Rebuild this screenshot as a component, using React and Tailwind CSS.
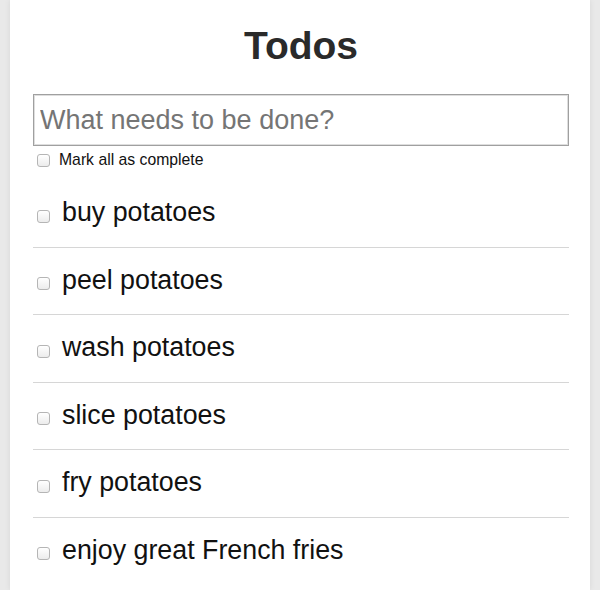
import React from "react";

const todos = [
  "buy potatoes",
  "peel potatoes",
  "wash potatoes",
  "slice potatoes",
  "fry potatoes",
  "enjoy great French fries",
];

function Box({ className = "" }) {
  return (
    <input
      type="checkbox"
      className={
        "appearance-none shrink-0 w-[13px] h-[13px] border border-[#b5b5b5] rounded-[3px] bg-gradient-to-b from-white to-[#ececec] " +
        className
      }
    />
  );
}

export default function App() {
  return (
    <div className="min-h-[590px] bg-[#e9e9e9] font-['Liberation_Sans',Arial,sans-serif]">
      <div className="mx-[10px] min-h-[590px] bg-white pl-[23px] pr-[21px] pt-[24px] shadow-[0_0_6px_rgba(0,0,0,0.08)]">
        <h1 className="text-center text-[39px] leading-[44px] font-bold text-[#2a2a2a]">
          Todos
        </h1>
        <input
          autoFocus
          placeholder="What needs to be done?"
          className="mt-[26px] block w-full h-[52px] border border-[#a0a0a0] shadow-[inset_0_0_0_1px_#dedede] px-[6px] text-[27px] text-[#111] placeholder:text-[#757575] outline-none"
        />
        <div className="mt-[8px] flex items-center h-[13px] pl-[4px]">
          <Box />
          <span className="ml-[9px] text-[15.75px] leading-[13px] text-[#111] -translate-y-[1px]">
            Mark all as complete
          </span>
        </div>
        <ul className="mt-[13px] divide-y divide-[#d6d6d6]">
          {todos.map((t) => (
            <li key={t} className="flex items-center pt-[18px] pb-[20px] pl-[4px]">
              <Box className="mt-[8px]" />
              <span className="ml-[12px] text-[26.8px] leading-[28.5px] text-[#111]">
                {t}
              </span>
            </li>
          ))}
        </ul>
      </div>
    </div>
  );
}
